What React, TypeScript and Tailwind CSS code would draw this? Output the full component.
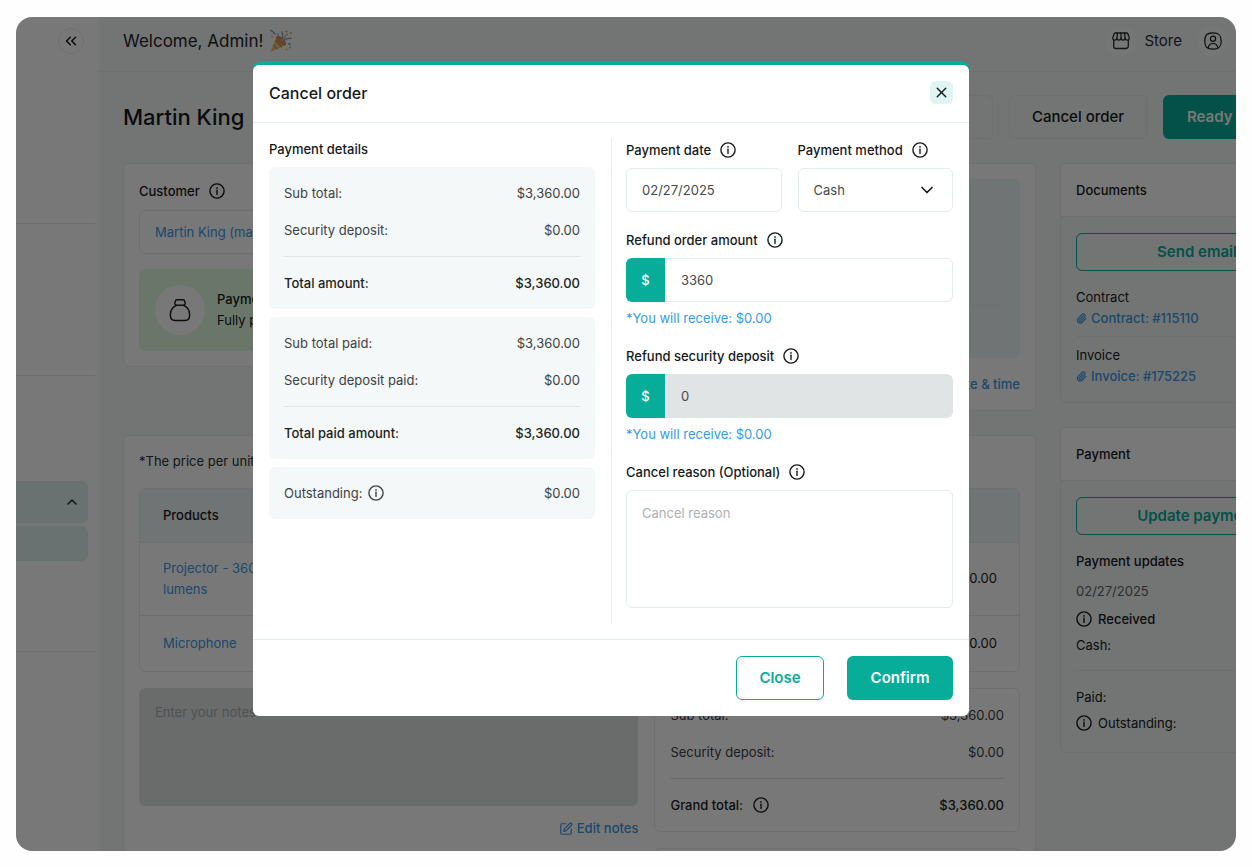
import React from "react";
import { ChevronDown, ChevronUp, ChevronsLeft, Paperclip, SquarePen, X } from "lucide-react";

function InfoIcon() {
  return (
    <svg viewBox="0 0 16 16" className="size-4 shrink-0" fill="none" stroke="currentColor" strokeWidth="1.4" aria-hidden="true">
      <circle cx="8" cy="8" r="7.1" />
      <path d="M8 7.2v4.3" strokeLinecap="round" />
      <circle cx="8" cy="4.9" r="0.85" fill="currentColor" stroke="none" />
    </svg>
  );
}

function PartyIcon() {
  return (
    <svg viewBox="0 0 24 24" className="size-6 shrink-0" aria-hidden="true">
      <path d="M2 22.4 7.6 7.2c3.8 1.6 7.4 5 9.2 8.8z" fill="#e9a95c" />
      <path d="M2 22.4 5.6 12.6c2.6 1.6 4.6 3.8 6 6z" fill="#f0c080" />
      <path d="M4.3 16.2c1.6.8 3 2.4 3.7 4M6 11.6c2.8 1.4 5 3.8 6.4 6.8" stroke="#c9792b" strokeWidth="1" fill="none" />
      <ellipse cx="12.2" cy="11.6" rx="6.3" ry="2.8" transform="rotate(44 12.2 11.6)" fill="#d09060" />
      <path d="M12 10.5c2-2 2.2-4.5 1-7.5M14 12.3c2-2.6 4.4-3.4 8-2.8" stroke="#6aa9d8" strokeWidth="1.4" fill="none" strokeLinecap="round" />
      <path d="M12.8 11.5 18.5 5" stroke="#e8b070" strokeWidth="1.4" strokeLinecap="round" />
      <path d="M1.8 1.5l1.8 1M4.5 3.5l1.5 1.5M19.6 14.8l1.6.4" stroke="#6aa9d8" strokeWidth="1.5" strokeLinecap="round" />
      <circle cx="17.5" cy="2.6" r="1" fill="#d88a60" />
      <circle cx="21.8" cy="4.2" r="1.1" fill="#e0b070" />
      <circle cx="3" cy="7.5" r="0.9" fill="#e0b070" />
      <circle cx="21" cy="18.5" r="1.1" fill="#e0a080" />
      <circle cx="17.6" cy="20.5" r="0.9" fill="#e0b070" />
      <circle cx="9" cy="5.5" r="0.9" fill="#d88a60" />
    </svg>
  );
}

function StoreIcon() {
  return (
    <svg viewBox="0 0 18 18" className="size-[18px]" fill="none" stroke="currentColor" strokeWidth="1.3" strokeLinejoin="round" strokeLinecap="round" aria-hidden="true">
      <path d="M1.7 8v6.2a2.3 2.3 0 0 0 2.3 2.3h10a2.3 2.3 0 0 0 2.3-2.3V8" />
      <path d="M3.6 1h10.8c.8 0 1.3.4 1.6 1.1l1.2 3.5c.3 1.3-.6 2.5-2 2.5-1.2 0-2.1-.8-2.1-2 0 1.2-.9 2-2.05 2S9 7.3 9 6.1c0 1.2-.9 2-2.05 2s-2.05-.8-2.05-2c0 1.2-.9 2-2.1 2-1.4 0-2.3-1.2-2-2.5L2 2.1C2.3 1.4 2.8 1 3.6 1z" />
      <path d="M5.4 1 4.9 6.1M9 1v5.1M12.6 1l.5 5.1" />
    </svg>
  );
}

function UserIcon() {
  return (
    <svg viewBox="0 0 18 18" className="size-[18px]" fill="none" stroke="currentColor" strokeWidth="1.2" strokeLinecap="round" aria-hidden="true">
      <path d="M9 .8c6 0 8.2 2.2 8.2 8.2S15 17.2 9 17.2.8 15 .8 9 3 .8 9 .8z" />
      <circle cx="9" cy="6.7" r="2.6" />
      <path d="M4.2 15.8c.4-3 2.2-4.3 4.8-4.3s4.4 1.3 4.8 4.3" />
    </svg>
  );
}

function MoneyBagIcon() {
  return (
    <svg viewBox="0 0 22 24" className="h-6 w-[22px]" fill="none" stroke="currentColor" strokeWidth="1.4" strokeLinejoin="round" aria-hidden="true">
      <path d="M7.8 7.2h6.4c1.4 0 2.1-.9 1.9-2l-.3-1.6c-.2-1.2-.9-1.8-2-1.8H8.2c-1.1 0-1.8.6-2 1.8l-.3 1.6c-.2 1.1.5 2 1.9 2z" />
      <path d="M7.8 7.2C4 8.9 1.4 12.2 1.4 16.2v1.4c0 3.2 1.5 4.9 4.6 4.9h10c3.1 0 4.6-1.7 4.6-4.9v-1.4c0-4-2.6-7.3-6.4-9" />
    </svg>
  );
}

function SummaryBox({ rows, total, className }: { rows: [string, string][]; total: React.ReactNode; className: string }) {
  return (
    <div className={className}>
      <dl className="flex flex-col gap-[17px] text-[#3c4143]">
        {rows.map(([name, value]) => (
          <div key={name} className="flex justify-between">
            <dt>{name}</dt>
            <dd>{value}</dd>
          </div>
        ))}
      </dl>
      <div className="mt-4 flex justify-between border-t border-[#e0e6e7] pt-4 font-medium text-[#1b1f21]">{total}</div>
    </div>
  );
}

function FieldLabel({ htmlFor, children }: { htmlFor: string; children: React.ReactNode }) {
  return (
    <div className="mb-1.5 flex h-6 items-center gap-[9px] text-[#16191b]">
      <label htmlFor={htmlFor} className="font-medium">
        {children}
      </label>
      <InfoIcon />
    </div>
  );
}

function AmountField({ id, label, value, disabled }: { id: string; label: string; value: string; disabled?: boolean }) {
  return (
    <div>
      <FieldLabel htmlFor={id}>{label}</FieldLabel>
      <div className="flex h-11 overflow-hidden rounded-md">
        <span className="flex w-[39px] shrink-0 items-center justify-center bg-[#07ad99] font-medium text-white">$</span>
        <input
          id={id}
          defaultValue={value}
          disabled={disabled}
          className="min-w-0 flex-1 rounded-r-md border border-l-0 border-[#e4eced] bg-white px-4 text-[#45494b] disabled:border-[#e0e4e5] disabled:bg-[#e0e4e5]"
        />
      </div>
      <p className="mt-1.5 text-[#369ae6]">*You will receive: $0.00</p>
    </div>
  );
}

function Sidebar() {
  return (
    <aside className="w-[83px] shrink-0 bg-white">
      <div className="h-[207px] w-[79px] border-b border-[#e6ebeb] pt-[11px]">
        <button aria-label="Collapse menu" className="ml-[42px] flex size-[26px] items-center justify-center rounded-full border border-[#e9eded]">
          <ChevronsLeft className="size-[18px]" strokeWidth={2} />
        </button>
      </div>
      <div className="h-[152px] w-[79px] border-b border-[#e6ebeb]" />
      <div className="flex h-[276px] w-[79px] flex-col gap-[3px] border-b border-[#e6ebeb] pt-[105px] pr-[7px]">
        <button aria-label="Toggle section" className="flex h-[42px] shrink-0 items-center justify-end rounded-r-md bg-[#dff3f1] pr-2">
          <ChevronUp className="size-4" />
        </button>
        <div className="h-[35px] shrink-0 rounded-r-md bg-[#dff3f1]" />
      </div>
    </aside>
  );
}

function TopBar() {
  return (
    <header className="flex h-[55px] items-center justify-between border-b border-[#e8eded] pr-[130px] pb-1.5 pl-6">
      <p className="flex items-center gap-1.5 text-[17px] text-[#1f2426]">
        Welcome, Admin! <PartyIcon />
      </p>
      <div className="flex items-center">
        <a href="#store" className="flex items-center gap-2 text-[15px] text-[#2a2f31]">
          <span className="flex size-[30px] items-center justify-center rounded-full bg-[#f9fbfb]">
            <StoreIcon />
          </span>
          Store
        </a>
        <button aria-label="Account" className="ml-4 flex size-[30px] items-center justify-center rounded-full bg-[#f9fbfb]">
          <UserIcon />
        </button>
      </div>
    </header>
  );
}

function CustomerCard() {
  return (
    <section className="rounded-md border border-[#e9eeee] bg-white p-[15px]">
      <h2 className="flex h-6 items-center gap-[9px] font-medium">
        Customer <InfoIcon />
      </h2>
      <div className="mt-[7px] flex h-11 items-center rounded-md border border-[#e8eded] px-[15px]">
        <a href="#customer" className="text-[#3a9ae4]">
          Martin King (martin)
        </a>
      </div>
      <div className="mt-[15px] flex items-center gap-3 rounded-md bg-[#e4fbe4] p-4">
        <span className="flex size-[50px] items-center justify-center rounded-full bg-white">
          <MoneyBagIcon />
        </span>
        <div className="leading-[21px]">
          <p className="font-medium">Payment</p>
          <p>Fully paid</p>
        </div>
      </div>
    </section>
  );
}

function DateCard() {
  return (
    <section className="rounded-md border border-[#e9eeee] bg-white p-[15px]">
      <div className="h-[179px] rounded-md bg-[#f1f6f6] px-4">
        <div className="h-[127px] border-b border-[#e8eded]" />
      </div>
      <div className="mt-4 flex justify-end pb-px">
        <a href="#dates" className="font-medium text-[#3a9ae4]">
          Edit date &amp; time
        </a>
      </div>
    </section>
  );
}

function OrderCard() {
  return (
    <section className="rounded-t-md border border-[#e9eeee] bg-white p-[15px]">
      <p className="leading-[21px] text-[#2b3032]">*The price per unit</p>
      <div className="mt-4 overflow-hidden rounded-md border border-[#e8eded]">
        <table className="w-full leading-[21px]">
          <thead className="bg-[#f1f6f6]">
            <tr>
              <th className="h-[53px] px-[23px] text-left font-medium">Products</th>
              <th />
            </tr>
          </thead>
          <tbody>
            <tr className="border-t border-[#e8eded]">
              <td className="h-[73px] px-[23px]">
                <a href="#projector" className="block w-28 text-[#3a9ae4]">
                  Projector - 3600 lumens
                </a>
              </td>
              <td className="px-[22px] text-right">$0.00</td>
            </tr>
            <tr className="border-t border-[#e8eded]">
              <td className="h-14 px-[23px]">
                <a href="#microphone" className="text-[#3a9ae4]">
                  Microphone
                </a>
              </td>
              <td className="px-[22px] text-right">$0.00</td>
            </tr>
          </tbody>
        </table>
      </div>
      <div className="mt-4 grid grid-cols-[500fr_366fr] gap-4">
        <div>
          <textarea
            aria-label="Notes"
            placeholder="Enter your notes"
            disabled
            className="block h-[118px] w-full resize-none rounded-md bg-[#e2e6e6] px-4 py-3.5 placeholder:text-[#a5acaf]"
          />
          <div className="mt-3 flex justify-end leading-[21px]">
            <button className="flex items-center gap-1 font-medium text-[#3a9ae4]">
              <SquarePen className="size-3.5" /> Edit notes
            </button>
          </div>
        </div>
        <div className="flex flex-col gap-4">
          <SummaryBox
            className="rounded-md border border-[#e8eded] px-[15px] py-4"
            rows={[
              ["Sub total:", "$3,360.00"],
              ["Security deposit:", "$0.00"],
            ]}
            total={
              <>
                <span className="flex items-center gap-2.5">
                  Grand total: <InfoIcon />
                </span>
                <span>$3,360.00</span>
              </>
            }
          />
          <div className="h-20 rounded-md border border-[#e8eded]" />
        </div>
      </div>
    </section>
  );
}

function SideCard({ title, children }: { title: string; children: React.ReactNode }) {
  return (
    <section className="overflow-hidden rounded-md border border-[#e7ecec]">
      <h2 className="flex h-[53px] items-center border-b border-[#e7ecec] bg-white px-[15px] font-medium">{title}</h2>
      <div className="px-[15px] pt-4 pb-[15px]">{children}</div>
    </section>
  );
}

function OutlineButton({ children }: { children: React.ReactNode }) {
  return (
    <button className="flex h-[38px] w-full items-center justify-center rounded-md border border-[#07ad99] text-[15px] font-semibold text-[#07ad99]">{children}</button>
  );
}

function FileLink({ children }: { children: React.ReactNode }) {
  return (
    <a href="#file" className="flex items-center gap-1 font-medium text-[#3a9ae4]">
      <Paperclip className="size-[11px]" strokeWidth={2.5} /> {children}
    </a>
  );
}

function OrderPage() {
  return (
    <main className="flex flex-col gap-6 px-6 pt-[23px]">
      <div className="flex items-center gap-4 text-[15px]">
        <h1 className="mr-auto text-[22px] font-medium">Martin King</h1>
        <button className="h-11 rounded-md border border-[#e8eded] px-6 font-medium">Edit</button>
        <button className="h-11 w-[138px] rounded-md border border-[#e8eded] font-medium">Cancel order</button>
        <button className="h-11 w-[171px] rounded-md bg-[#07ad99] px-6 text-left font-semibold text-white">Ready</button>
      </div>
      <div className="flex items-start gap-6">
        <div className="flex min-w-0 flex-1 flex-col gap-6">
          <div className="grid grid-cols-2 items-start gap-6">
            <CustomerCard />
            <DateCard />
          </div>
          <OrderCard />
        </div>
        <div className="flex w-[274px] shrink-0 flex-col gap-6">
          <SideCard title="Documents">
            <OutlineButton>Send email</OutlineButton>
            <div className="mt-4 border-b border-[#e8eded] pb-[7px] leading-[21px]">
              <p>Contract</p>
              <FileLink>Contract: #115110</FileLink>
            </div>
            <div className="pt-2 leading-[21px]">
              <p>Invoice</p>
              <FileLink>Invoice: #175225</FileLink>
            </div>
          </SideCard>
          <SideCard title="Payment">
            <OutlineButton>Update payment</OutlineButton>
            <h3 className="mt-4 font-medium">Payment updates</h3>
            <p className="mt-2.5 text-[#5c6264]">02/27/2025</p>
            <p className="mt-2 flex items-center gap-1.5 font-medium">
              <InfoIcon /> Received
            </p>
            <p className="mt-1.5">Cash:</p>
            <div className="mt-[15px] border-t border-[#e8eded] pt-4 pb-1">
              <p>Paid:</p>
              <p className="mt-1.5 flex items-center gap-1.5">
                <InfoIcon /> Outstanding:
              </p>
            </div>
          </SideCard>
        </div>
      </div>
    </main>
  );
}

function CancelDialog() {
  return (
    <div role="dialog" aria-modal="true" aria-labelledby="dialog-title" className="w-[716px] max-w-full rounded-lg bg-[#07ad99] pt-1">
      <div className="rounded-md bg-white">
        <div className="flex h-[58px] items-center justify-between border-b border-[#e4ecee] px-4 pb-0.5">
          <h2 id="dialog-title" className="text-base font-medium">
            Cancel order
          </h2>
          <button aria-label="Close dialog" className="flex size-[23px] items-center justify-center rounded-md bg-[#e0f4f3]">
            <X className="size-[17px]" />
          </button>
        </div>
        <div className="grid grid-cols-2 px-4 py-[15px]">
          <div className="flex flex-col gap-2 pr-4">
            <h3 className="flex h-[21px] items-center font-medium">Payment details</h3>
            <SummaryBox
              className="rounded-md bg-[#f4f8f9] px-[15px] py-4"
              rows={[
                ["Sub total:", "$3,360.00"],
                ["Security deposit:", "$0.00"],
              ]}
              total={
                <>
                  <span>Total amount:</span>
                  <span>$3,360.00</span>
                </>
              }
            />
            <SummaryBox
              className="rounded-md bg-[#f4f8f9] px-[15px] py-4"
              rows={[
                ["Sub total paid:", "$3,360.00"],
                ["Security deposit paid:", "$0.00"],
              ]}
              total={
                <>
                  <span>Total paid amount:</span>
                  <span>$3,360.00</span>
                </>
              }
            />
            <div className="flex justify-between rounded-md bg-[#f4f8f9] px-[15px] py-4 text-[#3c4143]">
              <span className="flex items-center gap-1.5">
                Outstanding: <InfoIcon />
              </span>
              <span>$0.00</span>
            </div>
          </div>
          <form className="flex flex-col gap-4 border-l border-[#e4ecee] pb-4 pl-[14px]">
            <div className="grid grid-cols-2 gap-4">
              <div>
                <FieldLabel htmlFor="payment-date">Payment date</FieldLabel>
                <input id="payment-date" defaultValue="02/27/2025" className="h-11 w-full rounded-md border border-[#e4eced] px-[15px] text-[#45494b]" />
              </div>
              <div>
                <FieldLabel htmlFor="payment-method">Payment method</FieldLabel>
                <div className="relative">
                  <select id="payment-method" className="h-11 w-full appearance-none rounded-md border border-[#e4eced] bg-white px-[15px] text-[#45494b]">
                    <option>Cash</option>
                  </select>
                  <ChevronDown className="pointer-events-none absolute top-3 right-4 size-5" />
                </div>
              </div>
            </div>
            <AmountField id="refund-order" label="Refund order amount" value="3360" />
            <AmountField id="refund-deposit" label="Refund security deposit" value="0" disabled />
            <div>
              <FieldLabel htmlFor="cancel-reason">Cancel reason (Optional)</FieldLabel>
              <textarea
                id="cancel-reason"
                placeholder="Cancel reason"
                className="block h-[118px] w-full resize-none rounded-md border border-[#e4eced] px-[15px] py-3 placeholder:text-[#abb0b2]"
              />
            </div>
          </form>
        </div>
        <div className="flex justify-end gap-[23px] border-t border-[#e4ecee] p-4 text-[15px] font-semibold">
          <button className="h-11 w-[88px] rounded-md border border-[#07ad99] text-[#07ad99]">Close</button>
          <button className="h-11 w-[106px] rounded-md bg-[#07ad99] text-white">Confirm</button>
        </div>
      </div>
    </div>
  );
}

export default function App() {
  return (
    <div className="h-screen min-h-[760px] bg-[#fefefe] px-4 pt-[17px] pb-4 font-['Inter',sans-serif] text-[13px] leading-5 text-[#16191b]">
      <div className="relative h-full overflow-hidden rounded-2xl bg-[#f4f8f8]">
        <div className="flex min-h-full w-[110%]">
          <Sidebar />
          <div className="min-w-0 flex-1">
            <TopBar />
            <OrderPage />
          </div>
        </div>
        <div className="absolute inset-0 flex items-start justify-center bg-black/53 pt-11 pr-[30px]">
          <CancelDialog />
        </div>
      </div>
    </div>
  );
}
